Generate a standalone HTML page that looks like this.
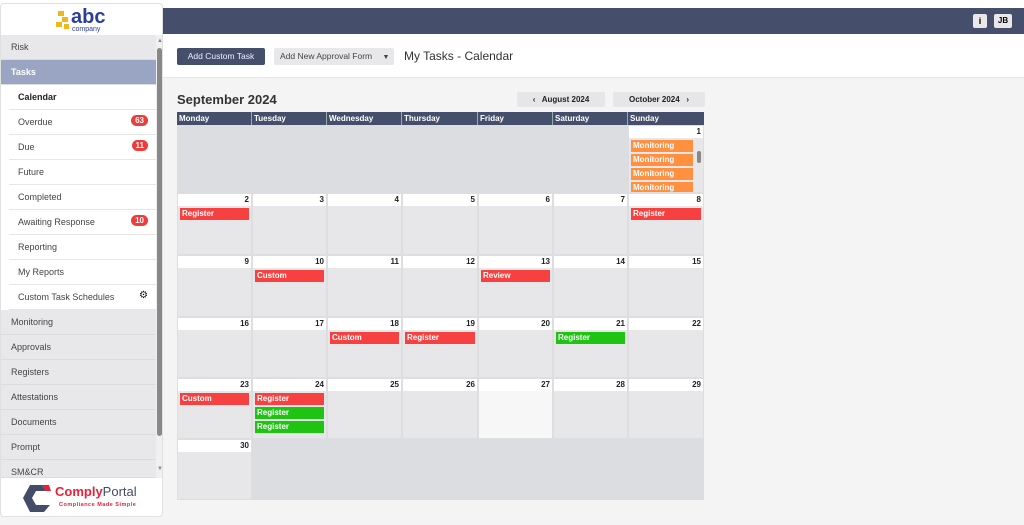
<!DOCTYPE html><html><head><style>
*{margin:0;padding:0;box-sizing:border-box}
body{width:1024px;height:525px;background:#f4f4f4;font-family:"Liberation Sans",sans-serif;position:relative;overflow:hidden}
.a{position:absolute}
#sb{left:0;top:3px;width:163px;height:514px;background:#fff;border:1px solid #e0e0e0;border-radius:4px;overflow:hidden}
.it{position:absolute;left:0;width:155px;height:25px;font-size:9px;color:#444;padding:7px 0 0 10px;background:#e8e8ea;border-bottom:1px solid #dcdcdc}
.sub{left:8px;width:147px;background:#fff;padding-left:9px;border-bottom:1px solid #e6e6e6}
.bd{position:absolute;right:8px;top:5px;background:#ee3b3b;color:#fff;font-size:8px;font-weight:bold;border-radius:7px;padding:1px 4px}
.hd{top:112px;height:13px;background:#454f6b;color:#fff;font-size:8px;font-weight:bold;padding:2px 0 0 2px;border-right:1px solid #9aa}
.cell{background:#e7e7e9;border:1px solid #dedee0}
.num{position:absolute;left:0;right:0;top:0;height:12px;background:#fff;font-size:8px;font-weight:bold;text-align:right;padding:1px 2px 0 0;color:#222}
.ev{position:absolute;left:2px;right:2px;height:12px;color:#fff;font-size:8px;font-weight:bold;padding:1px 0 0 2px}
.r{background:#f74040}.g{background:#1fc412}.o{background:#ff9040}
</style></head><body>
<div class="a" style="left:0;top:0;width:1024px;height:8px;background:#fff"></div>
<div class="a" style="left:163px;top:8px;width:861px;height:26px;background:#454f6b"></div>
<div class="a" style="left:973px;top:14px;width:14px;height:14px;background:#e8e8ea;border-radius:2px;font-size:9px;text-align:center;font-weight:bold;line-height:14px">i</div>
<div class="a" style="left:994px;top:14px;width:18px;height:14px;background:#e8e8ea;border-radius:2px;font-size:8px;text-align:center;font-weight:bold;line-height:14px">JB</div>
<div class="a" style="left:163px;top:34px;width:861px;height:44px;background:#fff;border-bottom:1px solid #e6e6e6"></div>
<div class="a" style="left:177px;top:48px;width:88px;height:17px;background:#454f6b;border-radius:2px;color:#eef;font-size:8.5px;text-align:center;line-height:17px">Add Custom Task</div>
<div class="a" style="left:274px;top:48px;width:120px;height:17px;background:#e8e8ea;border-radius:2px;color:#444;font-size:8.5px;line-height:17px;padding-left:6px">Add New Approval Form <span style="margin-left:8px;font-size:7px">▼</span></div>
<div class="a" style="left:404px;top:49px;font-size:12px;color:#333">My Tasks - Calendar</div>
<div class="a" style="left:177px;top:92px;font-size:13px;font-weight:bold;color:#333">September 2024</div>
<div class="a" style="left:517px;top:92px;width:88px;height:15px;background:#e6e6e8;border-radius:2px;font-size:8px;font-weight:bold;text-align:center;line-height:15px;color:#222">‹&nbsp;&nbsp; August 2024</div>
<div class="a" style="left:613px;top:92px;width:92px;height:15px;background:#e6e6e8;border-radius:2px;font-size:8px;font-weight:bold;text-align:center;line-height:15px;color:#222">October 2024 &nbsp;&nbsp;›</div>

<div class="a hd" style="left:177px;width:75px">Monday</div>
<div class="a hd" style="left:252px;width:75px">Tuesday</div>
<div class="a hd" style="left:327px;width:75px">Wednesday</div>
<div class="a hd" style="left:402px;width:76px">Thursday</div>
<div class="a hd" style="left:478px;width:75px">Friday</div>
<div class="a hd" style="left:553px;width:75px">Saturday</div>
<div class="a hd" style="left:628px;width:76px;border:0">Sunday</div>

<div class="a" style="left:177px;top:125px;width:451px;height:68px;background:#dcdde0"></div>
<div class="a cell" style="left:628px;top:125px;width:76px;height:68px"><div class="num">1</div>
<div class="ev o" style="top:14px;right:10px">Monitoring</div><div class="ev o" style="top:28px;right:10px">Monitoring</div><div class="ev o" style="top:42px;right:10px">Monitoring</div><div class="ev o" style="top:56px;right:10px;height:10px">Monitoring</div>
<div class="a" style="right:2px;top:25px;width:4px;height:12px;background:#888;border-radius:2px"></div></div>

<div class="a cell" style="left:177px;top:193px;width:75px;height:62px"><div class="num">2</div><div class="ev r" style="top:14px">Register</div></div>
<div class="a cell" style="left:252px;top:193px;width:75px;height:62px"><div class="num">3</div></div>
<div class="a cell" style="left:327px;top:193px;width:75px;height:62px"><div class="num">4</div></div>
<div class="a cell" style="left:402px;top:193px;width:76px;height:62px"><div class="num">5</div></div>
<div class="a cell" style="left:478px;top:193px;width:75px;height:62px"><div class="num">6</div></div>
<div class="a cell" style="left:553px;top:193px;width:75px;height:62px"><div class="num">7</div></div>
<div class="a cell" style="left:628px;top:193px;width:76px;height:62px"><div class="num">8</div><div class="ev r" style="top:14px">Register</div></div>

<div class="a cell" style="left:177px;top:255px;width:75px;height:62px"><div class="num">9</div></div>
<div class="a cell" style="left:252px;top:255px;width:75px;height:62px"><div class="num">10</div><div class="ev r" style="top:14px">Custom</div></div>
<div class="a cell" style="left:327px;top:255px;width:75px;height:62px"><div class="num">11</div></div>
<div class="a cell" style="left:402px;top:255px;width:76px;height:62px"><div class="num">12</div></div>
<div class="a cell" style="left:478px;top:255px;width:75px;height:62px"><div class="num">13</div><div class="ev r" style="top:14px">Review</div></div>
<div class="a cell" style="left:553px;top:255px;width:75px;height:62px"><div class="num">14</div></div>
<div class="a cell" style="left:628px;top:255px;width:76px;height:62px"><div class="num">15</div></div>

<div class="a cell" style="left:177px;top:317px;width:75px;height:61px"><div class="num">16</div></div>
<div class="a cell" style="left:252px;top:317px;width:75px;height:61px"><div class="num">17</div></div>
<div class="a cell" style="left:327px;top:317px;width:75px;height:61px"><div class="num">18</div><div class="ev r" style="top:14px">Custom</div></div>
<div class="a cell" style="left:402px;top:317px;width:76px;height:61px"><div class="num">19</div><div class="ev r" style="top:14px">Register</div></div>
<div class="a cell" style="left:478px;top:317px;width:75px;height:61px"><div class="num">20</div></div>
<div class="a cell" style="left:553px;top:317px;width:75px;height:61px"><div class="num">21</div><div class="ev g" style="top:14px">Register</div></div>
<div class="a cell" style="left:628px;top:317px;width:76px;height:61px"><div class="num">22</div></div>

<div class="a cell" style="left:177px;top:378px;width:75px;height:61px"><div class="num">23</div><div class="ev r" style="top:14px">Custom</div></div>
<div class="a cell" style="left:252px;top:378px;width:75px;height:61px"><div class="num">24</div><div class="ev r" style="top:14px">Register</div><div class="ev g" style="top:28px">Register</div><div class="ev g" style="top:42px">Register</div></div>
<div class="a cell" style="left:327px;top:378px;width:75px;height:61px"><div class="num">25</div></div>
<div class="a cell" style="left:402px;top:378px;width:76px;height:61px"><div class="num">26</div></div>
<div class="a cell" style="left:478px;top:378px;width:75px;height:61px;background:#f7f7f7"><div class="num">27</div></div>
<div class="a cell" style="left:553px;top:378px;width:75px;height:61px"><div class="num">28</div></div>
<div class="a cell" style="left:628px;top:378px;width:76px;height:61px"><div class="num">29</div></div>

<div class="a cell" style="left:177px;top:439px;width:75px;height:61px"><div class="num">30</div></div>
<div class="a" style="left:252px;top:439px;width:452px;height:61px;background:#dcdde0"></div>

<div id="sb" class="a">
<div class="a" style="left:55px;top:7px;width:14px;height:20px">
<div class="a" style="left:2px;top:0;width:6px;height:5px;background:#f2b51c"></div><div class="a" style="left:6px;top:6px;width:6px;height:5px;background:#f2b51c"></div><div class="a" style="left:0;top:11px;width:6px;height:5px;background:#f2b51c"></div><div class="a" style="left:8px;top:13px;width:5px;height:5px;background:#f2b51c"></div></div>
<div class="a" style="left:70px;top:2px;font-size:20px;font-weight:bold;color:#2b3e99;line-height:22px">abc</div>
<div class="a" style="left:71px;top:22px;font-size:7px;color:#2b3e99">company</div>
<div class="it" style="top:31px">Risk</div>
<div class="it" style="top:56px;background:#9aa5c4;color:#fff;font-weight:bold">Tasks</div>
<div class="it sub" style="top:81px;font-weight:bold;color:#222">Calendar</div>
<div class="it sub" style="top:106px">Overdue<span class="bd">63</span></div>
<div class="it sub" style="top:131px">Due<span class="bd">11</span></div>
<div class="it sub" style="top:156px">Future</div>
<div class="it sub" style="top:181px">Completed</div>
<div class="it sub" style="top:206px">Awaiting Response<span class="bd">10</span></div>
<div class="it sub" style="top:231px">Reporting</div>
<div class="it sub" style="top:256px">My Reports</div>
<div class="it sub" style="top:281px">Custom Task Schedules<span style="position:absolute;right:8px;top:5px;font-size:10px;color:#111">⚙</span></div>
<div class="it" style="top:306px">Monitoring</div>
<div class="it" style="top:331px">Approvals</div>
<div class="it" style="top:356px">Registers</div>
<div class="it" style="top:381px">Attestations</div>
<div class="it" style="top:406px">Documents</div>
<div class="it" style="top:431px">Prompt</div>
<div class="it" style="top:456px;height:18px">SM&amp;CR</div>
<div class="a" style="left:155px;top:31px;width:7px;height:443px;background:#f0f0f0"></div>
<div class="a" style="left:156px;top:44px;width:5px;height:388px;background:#888;border-radius:3px"></div>
<div class="a" style="left:156px;top:34px;font-size:6px;color:#888">▲</div>
<div class="a" style="left:156px;top:462px;font-size:6px;color:#888">▼</div>
<svg class="a" style="left:21px;top:479px" width="30" height="30" viewBox="0 0 30 30"><path d="M8 2 L20 2 L24 8 L14 8 L10 15 L14 22 L28 22 L22 29 L8 29 L1 15 Z" fill="#434d68"/><path d="M20 2 L27 2 L29 8 L24 8 Z" fill="#e8203a"/></svg>
<div class="a" style="left:54px;top:480px;font-size:13px;font-weight:bold;color:#e8203a">Comply<span style="color:#434d68;font-weight:normal">Portal</span></div>
<div class="a" style="left:58px;top:498px;font-size:5.5px;color:#e8203a;letter-spacing:.5px;font-weight:bold">Compliance Made Simple</div>
</div>
</body></html>
